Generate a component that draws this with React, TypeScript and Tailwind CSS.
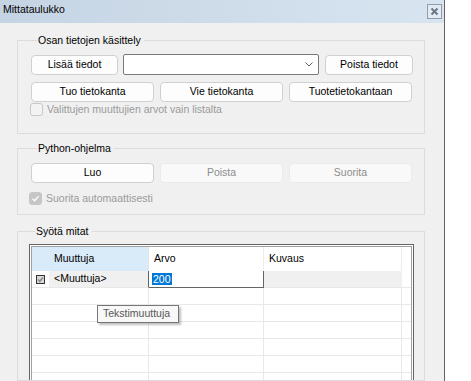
import React from "react";

function Btn({ children, disabled, className = "" }: { children: React.ReactNode; disabled?: boolean; className?: string }) {
  return (
    <div
      className={
        "h-[20px] flex items-center justify-center rounded-[4px] border " +
        (disabled ? "bg-[#f9f9f9] border-[#ebebeb] text-[#8c8c8c] " : "bg-[#fdfdfd] border-[#d0d0d0] text-black ") +
        className
      }
    >
      {children}
    </div>
  );
}

function CheckRow({ label, checked }: { label: string; checked?: boolean }) {
  return (
    <div className="flex items-center h-[13px] text-[#9a9a9a]">
      <div
        className={
          "w-[13px] h-[13px] rounded-[3px] border flex items-center justify-center " +
          (checked ? "bg-[#c6c6c6] border-[#c6c6c6]" : "bg-[#f3f3f3] border-[#c8c8c8]")
        }
      >
        {checked && (
          <svg width="9" height="9" viewBox="0 0 9 9">
            <path d="M1.5 4.8 L3.6 6.8 L7.6 2.3" fill="none" stroke="white" strokeWidth="1.3" />
          </svg>
        )}
      </div>
      <span className="ml-[4px] whitespace-nowrap">{label}</span>
    </div>
  );
}

function Legend({ children }: { children: React.ReactNode }) {
  return <legend className="ml-[6px] pl-px pr-[3px] leading-[16px] text-black">{children}</legend>;
}

const rowsBelow = [0, 1, 2, 3, 4, 5, 6];

export default function App() {
  return (
    <div className="w-[471px] h-[381px] bg-white overflow-hidden relative font-['Liberation_Sans',Arial,sans-serif] text-[10.5px] text-black">
      <div className="w-[445px] h-full bg-[#f0f0f0] border-r border-[#646464] flex flex-col">
        {/* title bar */}
        <div className="h-[23px] shrink-0 flex items-center justify-between pl-[3px] pr-[2px] pb-[3px] bg-gradient-to-r from-[#c5d4e3] to-[#d8e5f1]">
          <span className="text-[10.5px]">Mittataulukko</span>
          <div className="w-[15px] h-[15px] border border-[#8f9cad] bg-[#e3eaf2] flex items-center justify-center mt-[3px]">
            <svg width="9" height="9" viewBox="0 0 9 9">
              <path d="M1.5 1.5 L7.5 7.5 M7.5 1.5 L1.5 7.5" stroke="#6a7787" strokeWidth="2" />
            </svg>
          </div>
        </div>

        {/* content */}
        <div className="flex-1 flex flex-col pl-[17px] pr-[19px] pt-[9px] min-h-0">
          {/* group 1 */}
          <fieldset className="border border-[#dcdcdc] pl-[13px] pr-[11px] pt-[7px] pb-[17px]">
            <Legend>Osan tietojen käsittely</Legend>
            <div className="flex h-[20px]">
              <Btn className="w-[87px]">Lisää tiedot</Btn>
              <div className="ml-[5px] w-[196px] h-[21px] -mt-px bg-white border border-[#7a7a7a] rounded-[2px] flex items-center justify-end pr-[5px]">
                <svg width="8" height="5" viewBox="0 0 8 5">
                  <path d="M0.5 0.5 L4 4 L7.5 0.5" fill="none" stroke="#606060" strokeWidth="1" />
                </svg>
              </div>
              <Btn className="ml-[6px] flex-1">Poista tiedot</Btn>
            </div>
            <div className="flex gap-[6px] mt-[7px] pr-px">
              <Btn className="flex-1">Tuo tietokanta</Btn>
              <Btn className="flex-1">Vie tietokanta</Btn>
              <Btn className="flex-1">Tuotetietokantaan</Btn>
            </div>
            <div className="mt-[1px] -ml-[1px]">
              <CheckRow label="Valittujen muuttujien arvot vain listalta" />
            </div>
          </fieldset>

          {/* group 2 */}
          <fieldset className="mt-[6px] border border-[#dcdcdc] pl-[13px] pr-[12px] pt-[7px] pb-[9px]">
            <Legend>Python-ohjelma</Legend>
            <div className="flex gap-[6px]">
              <Btn className="flex-1">Luo</Btn>
              <Btn className="flex-1" disabled>Poista</Btn>
              <Btn className="flex-1" disabled>Suorita</Btn>
            </div>
            <div className="mt-[9px] -ml-[2px]">
              <CheckRow label="Suorita automaattisesti" checked />
            </div>
          </fieldset>

          {/* group 3 */}
          <fieldset className="mt-[8px] flex-1 min-h-0 border border-[#dcdcdc] pl-[11px] pr-[10px] pt-[5px] overflow-hidden">
            <Legend>Syötä mitat</Legend>
            <div className="border border-[#646464] p-px bg-white h-[200px]">
              <div className="border border-[#a0a0a0] h-full flex flex-col text-[10.5px]">
                {/* header */}
                <div className="flex h-[24px] shrink-0">
                  <div className="w-[117px] bg-[#d9eaf8] border-r border-[#e4e4e4] flex items-center pl-[22px]">Muuttuja</div>
                  <div className="w-[115px] border-r border-[#ececec] flex items-center pl-[5px]">Arvo</div>
                  <div className="w-[138px] border-r border-[#ececec] flex items-center pl-[5px]">Kuvaus</div>
                  <div className="flex-1" />
                </div>
                {/* row 1 */}
                <div className="flex h-[17px] shrink-0">
                  <div className="w-[17px] border-b border-[#e8e8e8] flex items-center justify-center">
                    <div className="w-[9px] h-[9px] border border-[#333] bg-[#d8d8d8] flex items-center justify-center">
                      <svg width="7" height="7" viewBox="0 0 7 7">
                        <path d="M1 3.5 L2.8 5.3 L6 1.5" fill="none" stroke="#8a8a8a" strokeWidth="1.5" />
                      </svg>
                    </div>
                  </div>
                  <div className="w-[100px] bg-[#f0f0f0] border-b border-[#e8e8e8] border-r border-r-[#646464] flex items-center pl-[5px]">
                    &lt;Muuttuja&gt;
                  </div>
                  <div className="w-[115px] bg-white border-b border-r border-[#646464] flex items-center pl-[3px]">
                    <span className="bg-[#0078d7] text-white leading-[12px] px-px">200</span>
                  </div>
                  <div className="w-[138px] bg-[#f0f0f0] border-b border-[#e8e8e8]" />
                  <div className="flex-1 border-b border-[#e8e8e8]" />
                </div>
                {rowsBelow.map((r) => (
                  <div key={r} className="flex h-[17px] shrink-0 border-b border-[#e8e8e8]">
                    <div className="w-[117px] border-r border-[#e8e8e8]" />
                    <div className="w-[115px] border-r border-[#e8e8e8]" />
                    <div className="w-[138px] border-r border-[#e8e8e8]" />
                    <div className="flex-1" />
                  </div>
                ))}
              </div>
            </div>
          </fieldset>
        </div>
      </div>

      {/* tooltip */}
      <div className="absolute left-[97px] top-[305px] w-[82px] h-[18px] border border-[#767676] bg-[#f8f8f8] text-[#575757] flex items-center pl-[5px] shadow-[2px_2px_2px_rgba(0,0,0,0.25)]">
        Tekstimuuttuja
      </div>
    </div>
  );
}
